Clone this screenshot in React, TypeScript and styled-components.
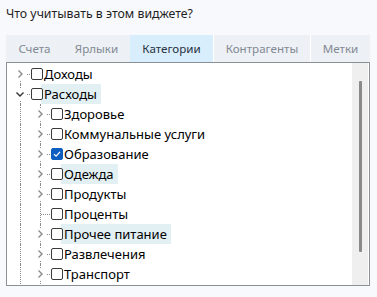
import * as React from 'react'
import styled, { createGlobalStyle } from 'styled-components'

const GlobalStyle = createGlobalStyle`
  html, body {
    margin: 0;
    padding: 0;
    background: #f8f9fc;
    font-family: 'Noto Sans', 'Open Sans', sans-serif;
  }
`

const Page = styled.div`
  width: 377px;
  height: 297px;
  overflow: hidden;
  padding: 0 7px 0 6px;
  box-sizing: border-box;
  display: grid;
  grid-template-rows: 35px 27px 224px 1fr;
`

const Title = styled.div`
  padding-top: 4px;
  font-size: 12.3px;
  line-height: 20px;
  color: #1f1f1f;
`

const TabBar = styled.div`
  display: flex;
  background: #edf0f4;
`

const Tab = styled.div<{ $width: number; $active?: boolean; $sep?: boolean }>`
  width: ${(p) => p.$width}px;
  display: flex;
  align-items: center;
  justify-content: center;
  box-sizing: border-box;
  font-size: 11.6px;
  color: ${(p) => (p.$active ? '#273140' : '#828a94')};
  background: ${(p) => (p.$active ? '#d9eefc' : 'transparent')};
  border-left: ${(p) => (p.$sep ? '1px solid #ffffff' : 'none')};
`

const Panel = styled.div`
  display: flex;
  min-height: 0;
  overflow: hidden;
  border: 1px solid #8b9096;
  background: #ffffff;
  box-sizing: border-box;
`

const TreeList = styled.div`
  flex: 1;
  min-width: 0;
  padding: 1px 0 0 3px;
`

const Scrollbar = styled.div`
  width: 16px;
  margin: 0 1px 0 0;
  background: #efefef;
  display: flex;
  justify-content: center;
  padding-top: 18px;
  box-sizing: border-box;
`

const Thumb = styled.div`
  width: 3px;
  height: 171px;
  background: #8a8a8a;
  border-radius: 1px;
`

const Row = styled.div`
  display: flex;
  align-items: center;
  height: 20px;
`

const Indent = styled.div<{ $line: boolean }>`
  width: 20px;
  height: 20px;
  flex: none;
  position: relative;
  &::before {
    content: '';
    display: ${(p) => (p.$line ? 'block' : 'none')};
    position: absolute;
    left: 10px;
    top: 0;
    bottom: 0;
    border-left: 1px dotted #8a8a8a;
  }
`

const Expander = styled.div<{ $up: boolean; $down: boolean }>`
  width: 20px;
  height: 20px;
  flex: none;
  position: relative;
  display: flex;
  align-items: center;
  justify-content: center;
  &::before {
    content: '';
    position: absolute;
    left: 10px;
    top: ${(p) => (p.$up ? '0' : '10px')};
    bottom: ${(p) => (p.$down ? '0' : '10px')};
    border-left: 1px dotted #8a8a8a;
  }
  &::after {
    content: '';
    position: absolute;
    left: 11px;
    right: 0;
    top: 10px;
    border-top: 1px dotted #8a8a8a;
  }
`

const Chevron = styled.svg`
  position: relative;
  z-index: 1;
  background: #ffffff;
  padding: 1px;
`

const Box = styled.div<{ $checked?: boolean }>`
  width: 12px;
  height: 12px;
  flex: none;
  margin-left: 1px;
  box-sizing: border-box;
  border-radius: 2px;
  border: 1px solid ${(p) => (p.$checked ? '#0c5fc0' : '#3a3a3a')};
  background: ${(p) => (p.$checked ? '#0c5fc0' : '#ffffff')};
  display: flex;
  align-items: center;
  justify-content: center;
  position: relative;
  z-index: 1;
`

const Label = styled.div<{ $hl?: boolean }>`
  height: 20px;
  line-height: 20px;
  margin-left: -2px;
  padding: 0 4px 0 3px;
  font-size: 13px;
  color: #000000;
  white-space: nowrap;
  background: ${(p) => (p.$hl ? '#e2eff3' : 'transparent')};
`

type Node = {
  label: string
  children?: Node[]
  expanded?: boolean
  leaf?: boolean
  checked?: boolean
  hl?: boolean
}

// only the visible part of the tree; both lists continue below the scroll edge
const tree: Node[] = [
  { label: 'Доходы' },
  {
    label: 'Расходы',
    expanded: true,
    hl: true,
    children: [
      { label: 'Здоровье' },
      { label: 'Коммунальные услуги' },
      { label: 'Образование', checked: true },
      { label: 'Одежда', hl: true },
      { label: 'Продукты' },
      { label: 'Проценты', leaf: true },
      { label: 'Прочее питание', hl: true },
      { label: 'Развлечения' },
      { label: 'Транспорт' },
    ],
  },
]

type Flat = { node: Node; guides: boolean[]; first: boolean; root: boolean }

const flatten = (nodes: Node[], guides: boolean[], root: boolean, out: Flat[]) => {
  nodes.forEach((node, i) => {
    out.push({ node, guides, first: i === 0, root })
    if (node.expanded && node.children) flatten(node.children, [...guides, true], false, out)
  })
  return out
}

const ChevronIcon = ({ open }: { open?: boolean }) => (
  <Chevron width="10" height="10" viewBox="0 0 10 10">
    <path
      d={open ? 'M1.5 3.5 L5 7 L8.5 3.5' : 'M3.5 1.5 L7 5 L3.5 8.5'}
      fill="none"
      stroke={open ? '#333333' : '#8a8a8a'}
      strokeWidth="1.4"
    />
  </Chevron>
)

const TreeRow = ({ item }: { item: Flat }) => {
  const { node, guides, first, root } = item
  return (
    <Row>
      {guides.map((g, i) => (
        <Indent key={i} $line={g} />
      ))}
      <Expander $up={!(first && root)} $down>
        {!node.leaf && <ChevronIcon open={node.expanded} />}
      </Expander>
      <Box $checked={node.checked}>
        {node.checked && (
          <svg width="8" height="8" viewBox="0 0 8 8">
            <path d="M1 4.2 L3.1 6.2 L7 1.8" fill="none" stroke="#ffffff" strokeWidth="1.2" />
          </svg>
        )}
      </Box>
      <Label $hl={node.hl}>{node.label}</Label>
    </Row>
  )
}

const tabs = [
  { label: 'Счета', width: 57 },
  { label: 'Ярлыки', width: 67 },
  { label: 'Категории', width: 83, active: true },
  { label: 'Контрагенты', width: 97, sep: true },
  { label: 'Метки', width: 60, sep: true },
]

export default function App() {
  const rows = flatten(tree, [], true, [])
  return (
    <Page>
      <GlobalStyle />
      <Title>Что учитывать в этом виджете?</Title>
      <TabBar>
        {tabs.map((t) => (
          <Tab key={t.label} $width={t.width} $active={t.active} $sep={t.sep}>
            {t.label}
          </Tab>
        ))}
      </TabBar>
      <Panel>
        <TreeList>
          {rows.map((r) => (
            <TreeRow key={r.node.label} item={r} />
          ))}
        </TreeList>
        <Scrollbar>
          <Thumb />
        </Scrollbar>
      </Panel>
    </Page>
  )
}
